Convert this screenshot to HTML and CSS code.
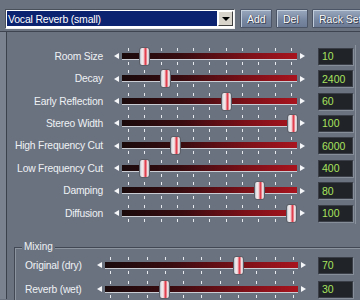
FILE: index.html
```html
<!DOCTYPE html>
<html>
<head>
<meta charset="utf-8">
<link rel="stylesheet" href="styles.css">
</head>
<body>
<div class="header">
  <div class="combo">
    <div class="combo-field"><span class="combo-sel">Vocal Reverb (small)</span></div>
    <div class="combo-btn"><span class="down"></span></div>
  </div>
  <button class="btn btn-add">Add</button>
  <button class="btn btn-del">Del</button>
  <button class="btn btn-rack">Rack Setup</button>
</div>
<div class="frame">
  <div class="strip"></div>
  <div class="panel">
    <div class="params">
      <div class="row"><span class="label">Room Size</span><div class="slider"><span class="arr-l"></span><div class="track"><span class="thumb" style="left:17px"></span></div><span class="arr-r"></span></div><span class="value">10</span></div>
      <div class="row"><span class="label">Decay</span><div class="slider"><span class="arr-l"></span><div class="track"><span class="thumb" style="left:38px"></span></div><span class="arr-r"></span></div><span class="value">2400</span></div>
      <div class="row"><span class="label">Early Reflection</span><div class="slider"><span class="arr-l"></span><div class="track"><span class="thumb" style="left:99px"></span></div><span class="arr-r"></span></div><span class="value">60</span></div>
      <div class="row"><span class="label">Stereo Width</span><div class="slider"><span class="arr-l"></span><div class="track"><span class="thumb" style="left:165px"></span></div><span class="arr-r"></span></div><span class="value">100</span></div>
      <div class="row"><span class="label">High Frequency Cut</span><div class="slider"><span class="arr-l"></span><div class="track"><span class="thumb" style="left:48px"></span></div><span class="arr-r"></span></div><span class="value">6000</span></div>
      <div class="row"><span class="label">Low Frequency Cut</span><div class="slider"><span class="arr-l"></span><div class="track"><span class="thumb" style="left:17px"></span></div><span class="arr-r"></span></div><span class="value">400</span></div>
      <div class="row"><span class="label">Damping</span><div class="slider"><span class="arr-l"></span><div class="track"><span class="thumb" style="left:132px"></span></div><span class="arr-r"></span></div><span class="value">80</span></div>
      <div class="row"><span class="label">Diffusion</span><div class="slider"><span class="arr-l"></span><div class="track"><span class="thumb" style="left:164px"></span></div><span class="arr-r"></span></div><span class="value">100</span></div>
    </div>
    <div class="group">
      <span class="legend">Mixing</span>
      <div class="mrow"><span class="mlabel">Original (dry)</span><div class="slider mslider"><span class="arr-l"></span><div class="track mtrack"><span class="thumb" style="left:128px"></span></div><span class="arr-r"></span></div><span class="value">70</span></div>
      <div class="mrow"><span class="mlabel">Reverb (wet)</span><div class="slider mslider"><span class="arr-l"></span><div class="track mtrack"><span class="thumb" style="left:54px"></span></div><span class="arr-r"></span></div><span class="value">30</span></div>
    </div>
  </div>
</div>
</body>
</html>
```

FILE: styles.css
```css
* { box-sizing: border-box; }
html, body { margin: 0; padding: 0; }
body {
  width: 360px;
  height: 300px;
  overflow: hidden;
  background: #6a7280;
  font-family: "Liberation Sans", Arial, sans-serif;
  font-size: 10px;
  color: #eef1f4;
}
.header {
  height: 32px;
  padding: 9px 0 0 5px;
  display: flex;
  align-items: flex-start;
  border-bottom: 1px solid #3f4550;
  white-space: nowrap;
  overflow: hidden;
}
.header > * { flex-shrink: 0; }
.combo {
  width: 230px;
  height: 20px;
  display: flex;
  border-top: 1px solid #4a505a;
  border-left: 1px solid #4a505a;
  border-right: 1px solid #f0f0f0;
  border-bottom: 1px solid #f0f0f0;
  background: #ffffff;
  padding: 1px 1px 2px 1px;
}
.combo-field {
  flex: 1;
  background: #0b2270;
  display: flex;
  align-items: center;
  padding-left: 1px;
  margin-right: 1px;
}
.combo-sel {
  color: #ffffff;
  font-size: 10.5px;
  letter-spacing: -0.2px;
}
.combo-btn {
  width: 15px;
  background: #d8d4cc;
  border-top: 1px solid #ffffff;
  border-left: 1px solid #ffffff;
  border-right: 1px solid #404040;
  border-bottom: 1px solid #404040;
  display: flex;
  align-items: center;
  justify-content: center;
}
.down {
  width: 0; height: 0;
  border-left: 4px solid transparent;
  border-right: 4px solid transparent;
  border-top: 4px solid #000;
}
.btn {
  height: 19px;
  margin: 0;
  padding: 0 6px;
  font-family: "Liberation Sans", Arial, sans-serif;
  font-size: 10.5px;
  color: #ffffff;
  text-shadow: 0 0 1px #2a3040, 1px 1px 0 #40485a;
  background: linear-gradient(#9aa8be, #7887a0 60%, #6d7b94);
  border: 1px solid #4c5566;
  box-shadow: inset 1px 1px 0 #c2cddc;
  border-radius: 1px;
  text-align: left;
}
.btn-add { width: 32px; margin-left: 5px; }
.btn-del { width: 32px; margin-left: 4px; }
.btn-rack { width: 60px; margin-left: 4px; }

.frame {
  display: flex;
  height: 267px;
}
.strip {
  width: 6px;
  background: #7a828f;
}
.panel {
  flex: 1;
  border-left: 1px solid #3c424c;
  padding-top: 13px;
}
.params {
  display: flex;
  flex-direction: column;
  border-right: 1px solid #8a929e;
  width: 349px;
}
.row {
  height: 22.43px;
  display: flex;
  align-items: center;
}
.label {
  width: 97px;
  text-align: right;
  padding-right: 1px;
  letter-spacing: -0.2px;
  font-size: 10.3px;
}
.slider {
  display: flex;
  align-items: center;
  margin-left: 9px;
}
.arr-l, .arr-r {
  width: 9px;
  height: 19px;
  display: flex;
  align-items: center;
}
.arr-l { justify-content: flex-end; padding-right: 3px; }
.arr-r { justify-content: flex-start; padding-left: 3px; }
.arr-l::before {
  content: "";
  border-top: 3.5px solid transparent;
  border-bottom: 3.5px solid transparent;
  border-right: 5px solid #f4f6f8;
}
.arr-r::before {
  content: "";
  border-top: 3.5px solid transparent;
  border-bottom: 3.5px solid transparent;
  border-left: 5px solid #f4f6f8;
}
.track {
  position: relative;
  width: 175px;
  height: 19px;
  background-image:
    repeating-linear-gradient(to right, #e6eaee 0 1px, transparent 1px 16.3px),
    linear-gradient(#c9ccd2, #c9ccd2),
    linear-gradient(to right, #1a0a0c, #3a0c10 35%, #7a1018 70%, #a8141e),
    repeating-linear-gradient(to right, #e6eaee 0 1px, transparent 1px 16.3px);
  background-repeat: no-repeat;
  background-size: 164px 3px, 175px 1px, 175px 6px, 164px 3px;
  background-position: 6px 1px, 0 12px, 0 6px, 6px 15px;
}
.mtrack {
  width: 193px;
  background-image:
    repeating-linear-gradient(to right, #e6eaee 0 1px, transparent 1px 18.3px),
    linear-gradient(#c9ccd2, #c9ccd2),
    linear-gradient(to right, #1a0a0c, #3a0c10 35%, #7a1018 70%, #a8141e),
    repeating-linear-gradient(to right, #e6eaee 0 1px, transparent 1px 18.3px);
  background-size: 184px 3px, 193px 1px, 193px 6px, 184px 3px;
  background-position: 5px 1px, 0 12px, 0 6px, 5px 15px;
}
.thumb {
  position: absolute;
  top: 0;
  width: 11px;
  height: 19px;
  border: 1px solid #5a5e66;
  border-radius: 3px;
  background: linear-gradient(to right, #b8bcc4 0, #f2f2f4 2px, #f0c8cc 4px, #e0404e 5px, #e0404e 6px, #f0c8cc 7px, #f2f2f4 8px, #a8acb4 100%);
}
.value {
  margin-left: 12px;
  width: 35px;
  height: 17px;
  background: #202328;
  border: 1px solid #3a3e46;
  box-shadow: 1px 1px 0 #868e9a;
  color: #a8e45e;
  font-size: 10.5px;
  padding-left: 3px;
  display: flex;
  align-items: center;
}
.group {
  position: relative;
  margin-top: 23px;
  margin-left: 7px;
  border-left: 1px solid #434954;
  border-top: 1px solid #434954;
  box-shadow: inset 1px 1px 0 #8c94a0;
  padding-top: 5px;
}
.legend {
  position: absolute;
  top: -7px;
  left: 7px;
  padding: 0 2px;
  background: #6a7280;
  line-height: 12px;
}
.mrow {
  height: 24px;
  display: flex;
  align-items: center;
}
.mlabel {
  width: 81px;
  padding-left: 10px;
  letter-spacing: -0.2px;
  font-size: 10.3px;
}
.mslider { margin-left: 0; }
.mrow .value { margin-left: 11px; }
```
